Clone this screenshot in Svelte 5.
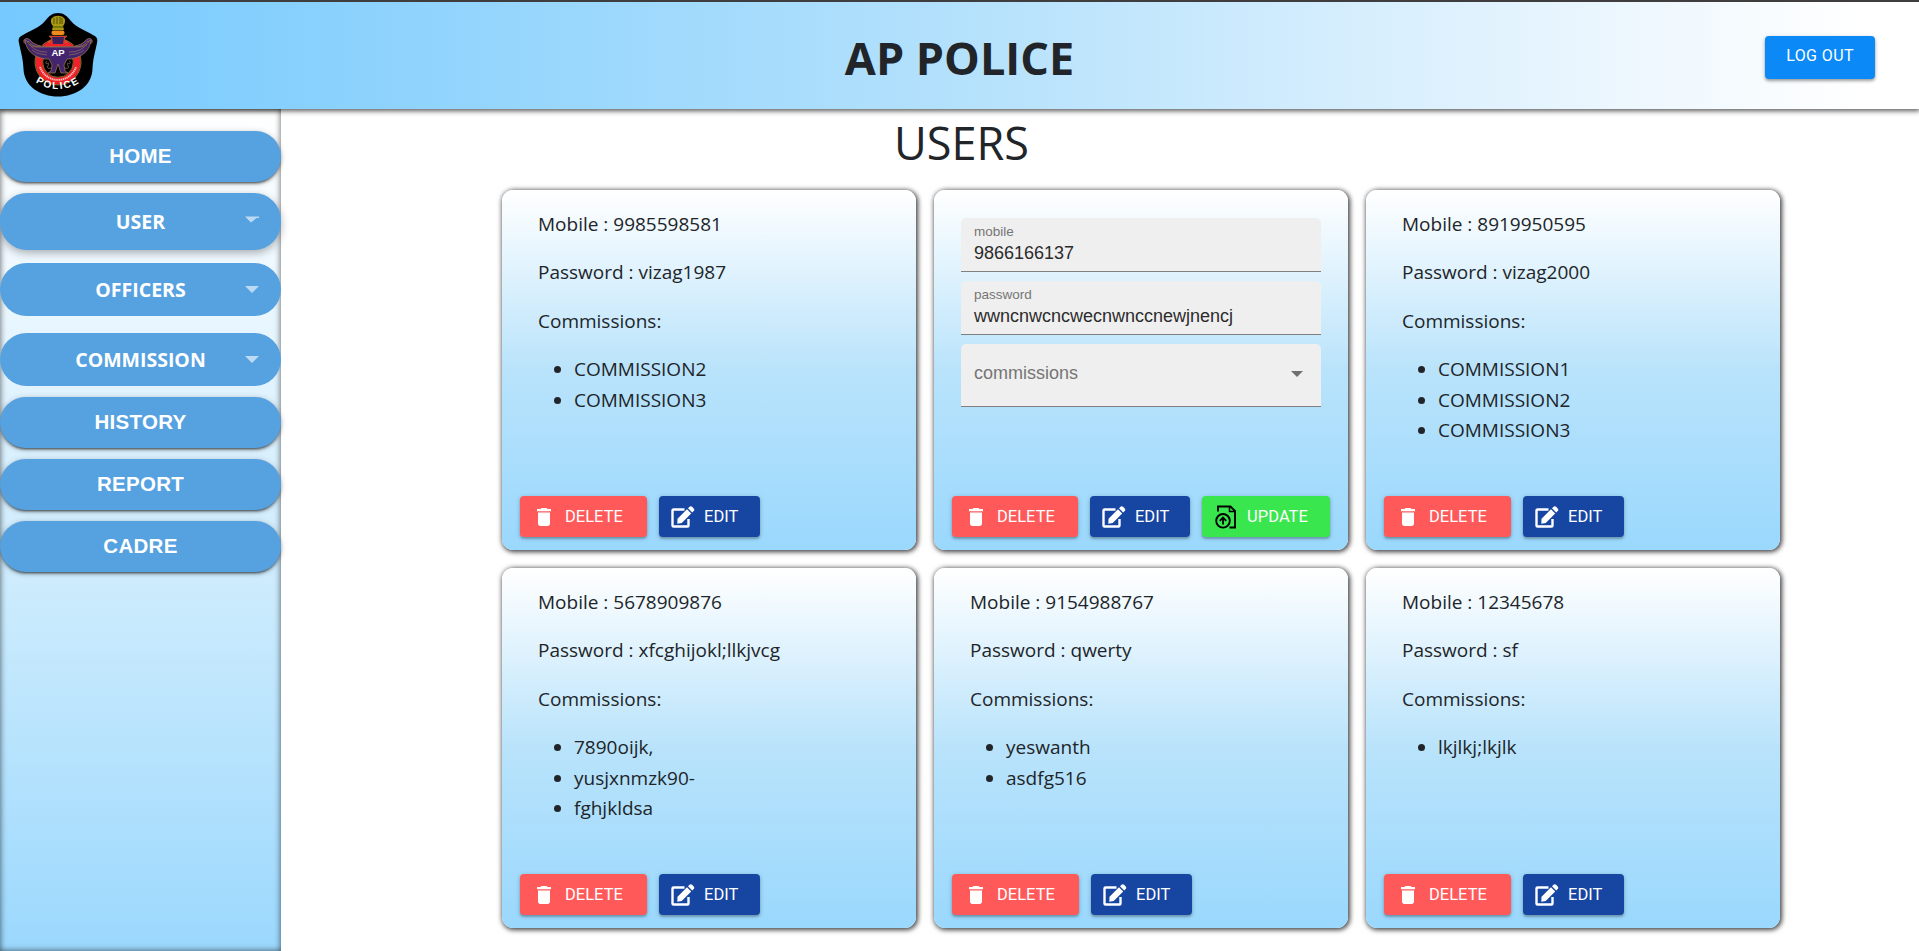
<script>
  const nav = [
    { label: 'HOME', h: 51, mb: 11, kind: 'raised' },
    { label: 'USER', h: 57, mb: 13, kind: 'panel soft', arrow: 'cut' },
    { label: 'OFFICERS', h: 53, mb: 17, kind: 'panel', arrow: 'full' },
    { label: 'COMMISSION', h: 53, mb: 11, kind: 'panel', arrow: 'full' },
    { label: 'HISTORY', h: 51, mb: 11, kind: 'raised' },
    { label: 'REPORT', h: 51, mb: 11, kind: 'raised' },
    { label: 'CADRE', h: 51, mb: 11, kind: 'raised' }
  ];
  const users = [
    { mobile: '9985598581', password: 'vizag1987', commissions: ['COMMISSION2', 'COMMISSION3'] },
    { mobile: '9866166137', password: 'wwncnwcncwecnwnccnewjnencj', editing: true, commissions: [] },
    { mobile: '8919950595', password: 'vizag2000', commissions: ['COMMISSION1', 'COMMISSION2', 'COMMISSION3'] },
    { mobile: '5678909876', password: 'xfcghijokl;llkjvcg', commissions: ['7890oijk,', 'yusjxnmzk90-', 'fghjkldsa'] },
    { mobile: '9154988767', password: 'qwerty', commissions: ['yeswanth', 'asdfg516'] },
    { mobile: '12345678', password: 'sf', commissions: ['lkjlkj;lkjlk'] }
  ];
</script>

<div class="page">
  <header>
    <svg class="logo" viewBox="0 0 80 86" aria-label="AP Police">
      <path d="M40 1c6 0 9 3 13 8 6 7 14 9 22 14 4 2 5 4 4 8-2 10-4 15-4.500 26C74 74 58 84.500 40 84.500S6 74 5.500 57C5 46 3 41 1 31c-1-4 0-6 4-8 8-5 16-7 22-14 4-5 7-8 13-8z" fill="#000" />
      <circle cx="40" cy="50" r="19" fill="#000" stroke="#ee2228" stroke-width="7" />
      <circle cx="40" cy="50" r="23" fill="none" stroke="#b98a3a" stroke-width=".8" />
      <circle cx="40" cy="50" r="15.300" fill="none" stroke="#b98a3a" stroke-width=".7" />
      <path d="M31 24h18l-3 3 4 3H30l4-3z" fill="#e5261f" stroke="#b98a3a" stroke-width=".5" />
      <path d="M34 25h12l-1 7H35z" fill="#39215f" />
      <path d="M33 35h14l9 0c7 0 12-2 14-6 1 4 5 3 4-1-1-2-4-2-6 0-2 3-6 5-11 6M33 35h-9c-7 0-12-2-14-6-1 4-5 3-4-1 1-2 4-2 6 0 2 3 6 5 11 6" fill="#4b2a7c" stroke="#9b774d" stroke-width=".8" />
      <path d="M7 28c3 0 3 7 12 7h42c9 0 9-7 12-7-1 10-8 17-20 19l-4 0-3 6 1 6 3 2-7 0-3-9-3 9h-7l3-2 1-6-3-6-4 0C15 45 8 38 7 28z" fill="#43256f" stroke="#a27d45" stroke-width=".7" />
      <path d="M11 32c5 6 10 8 18 8M14 38c5 4 9 4 15 5M69 32c-5 6-10 8-18 8M66 38c-5 4-9 4-15 5M31 51c-4 2-4-1-2-2M49 51c4 2 4-1 2-2M31 52c-3 4-1 5 2 4M49 52c3 4 1 5-2 4" fill="none" stroke="#8a6a59" stroke-width=".8" />
      <path d="M34 6c3-3 9-3 12 0 2 2 1 6-1 8l1 4H34l1-4c-2-2-3-6-1-8z" fill="#a79a12" />
      <path d="M36 6v6m3-7v7m3-7v7m2-6v6M35 15h10" stroke="#4d470a" stroke-width=".9" fill="none" />
      <rect x="33.500" y="18.500" width="13" height="4.500" rx="2" fill="#ef8a1d" />
      <text x="40" y="43.500" class="ap">AP</text>
      <path id="motto" d="M22 55a19 19 0 0 0 36 0" fill="none" stroke="#f6c9bd" stroke-width="1.900" stroke-dasharray="1.300 .6" />
      <path id="arc" d="M15 68a33 26 0 0 0 50 0" fill="none" />
      <text class="police"><textPath href="#arc" startOffset="50%">POLICE</textPath></text>
    </svg>
    <h1>AP POLICE</h1>
    <button class="logout">LOG OUT</button>
  </header>

  <div class="body">
    <nav>
      {#each nav as n}
        <button class="item {n.kind}" style="height:{n.h}px;margin-bottom:{n.mb}px">
          <span>{n.label}</span>
          {#if n.arrow === 'full'}
            <svg class="arrow" width="14" height="7" viewBox="0 0 14 7"><path d="M0 0h14L7 7z" fill="#bcdaf3" /></svg>
          {:else if n.arrow === 'cut'}
            <svg class="arrow" width="14" height="7" viewBox="0 0 14 7"><path d="M0 .5h14v1.500h-2.500L6 6.500z" fill="#bcdaf3" /></svg>
          {/if}
        </button>
      {/each}
    </nav>

    <main>
      <h2>USERS</h2>
      <div class="grid">
        {#each users as u}
          <section class="card">
            {#if u.editing}
              <div class="form">
                <label class="field"><small>mobile</small><b>{u.mobile}</b></label>
                <label class="field"><small>password</small><b>{u.password}</b></label>
                <div class="field select">
                  <span>commissions</span>
                  <svg width="12" height="6" viewBox="0 0 12 6"><path d="M0 0h12L6 6z" fill="#6f6f6f" /></svg>
                </div>
              </div>
            {:else}
              <div class="info">
                <p>Mobile : {u.mobile}</p>
                <p>Password : {u.password}</p>
                <p>Commissions:</p>
                <ul>
                  {#each u.commissions as c}<li>{c}</li>{/each}
                </ul>
              </div>
            {/if}
            <div class="actions">
              <button class="btn delete">
                <svg width="14" height="18" viewBox="0 0 14 18"><path d="M1 4.500h12v11.300c0 1.200-1 2.200-2.200 2.200H3.200C2 18 1 17 1 15.800zM0 1h3.500l1-1h5l1 1H14v2.200H0z" fill="#fff" /></svg>
                <span>DELETE</span>
              </button>
              <button class="btn edit">
                <svg width="24" height="22" viewBox="0 0 24 22">
                  <path d="M13.500 3.500H2.500a1 1 0 0 0-1 1v15a1 1 0 0 0 1 1h14a1 1 0 0 0 1-1V13" fill="none" stroke="#fff" stroke-width="2.400" />
                  <path d="M6.500 12.800 16 3.300l4.200 4.200-9.500 9.500-4.400.7zM17 2.300l1.500-1.500c.8-.8 1.800-.8 2.600 0l1.600 1.600c.8.800.8 1.800 0 2.600l-1.500 1.500z" fill="#fff" />
                </svg>
                <span>EDIT</span>
              </button>
              {#if u.editing}
                <button class="btn update">
                  <svg width="22" height="24" viewBox="0 0 22 24" fill="none" stroke="#000">
                    <path d="M3 6.500V1.500h12.500l4.500 4.500v16.500h-5.500" stroke-width="1.900" />
                    <path d="M14.500 2v4.500h5" stroke-width="1.500" />
                    <circle cx="8" cy="15.800" r="6.800" stroke-width="1.900" />
                    <path d="M8 19.500v-6.500M4.800 15.800 8 12.600l3.200 3.200" stroke-width="1.800" />
                  </svg>
                  <span>UPDATE</span>
                </button>
              {/if}
            </div>
          </section>
        {/each}
      </div>
    </main>
  </div>
</div>

<style>
  :global(body) { margin: 0; background: #fff; overflow: hidden; }
  * { box-sizing: border-box; }
  button { border: 0; padding: 0; margin: 0; cursor: pointer; }
  .page {
    height: 951px; display: flex; flex-direction: column; overflow: hidden;
    border-top: 2px solid #3f3d3d; color: #212529; font-family: "Open Sans", "Noto Sans", sans-serif;
  }
  header {
    flex: none; height: 107px; display: grid; grid-template-columns: 1fr auto 1fr; align-items: center;
    background: linear-gradient(90deg, #74c9fe 0%, #b4e1fc 50%, #edf7fe 85%, #fff 97%);
    box-shadow: 0 1px 5px 1px rgba(0, 0, 0, .65); position: relative; z-index: 1;
  }
  .logo { width: 80px; height: 86px; margin: -1px 0 0 18px; }
  .ap { font: bold 9.500px "Liberation Sans", sans-serif; fill: #fff; text-anchor: middle; }
  .police { font: bold 10px "Liberation Sans", sans-serif; fill: #fff; text-anchor: middle; letter-spacing: 1.700px; }
  h1 { margin: 4px 0 0; font-size: 45px; font-weight: 700; line-height: 54px; }
  .logout {
    justify-self: end; width: 110px; height: 43px; margin: 4px 44px 0 0; border-radius: 4px; background: #0a89f7; color: #fff;
    font: 16px/39px Roboto, sans-serif; padding-bottom: 4px; letter-spacing: .4px;
    box-shadow: 0 2px 3px rgba(0, 0, 0, .3), 0 1px 5px rgba(0, 0, 0, .15);
  }
  .body { flex: 1; display: flex; min-height: 0; }
  nav {
    width: 281px; flex: none; padding-top: 22px; display: flex; flex-direction: column;
    background: linear-gradient(180deg, #fff 0%, #e1f3fe 33%, #c9eafd 60%, #9bd8fd 100%);
    box-shadow: inset 0 0 6px rgba(0, 0, 0, .65);
  }
  .item {
    flex: none; width: 281px; border-radius: 27px; background: #56a1e0; color: #fff; position: relative;
    display: flex; align-items: center; justify-content: center;
    font: bold 20.500px "Liberation Sans", sans-serif; letter-spacing: .3px;
  }
  .raised { box-shadow: 0 3px 2px -2px rgba(0, 0, 0, .4), 0 2px 3px rgba(0, 0, 0, .3), 0 1px 6px rgba(0, 0, 0, .2); padding-bottom: 2px; }
  .panel { font: bold 19.500px "Open Sans", sans-serif; letter-spacing: 0; }
  .soft { box-shadow: 0 3px 9px rgba(0, 0, 0, .3); }
  .arrow { position: absolute; right: 22px; top: 23px; }
  main { flex: 1; min-width: 0; }
  h2 { margin: 7px 0 0 617px; transform: none; font-size: 45px; line-height: 54px; font-weight: 500; }
  main h2 { margin-left: 613px; }
  .grid { margin: 20px 0 0 221px; display: grid; grid-template-columns: repeat(3, 414px); gap: 18px; grid-auto-rows: 360px; }
  .card {
    border-radius: 11px; display: flex; flex-direction: column; justify-content: space-between; padding: 19px 18px 13px;
    background: linear-gradient(180deg, #fff 0%, #b9e3fb 50%, #9ad8fd 100%);
    box-shadow: 1px 1px 5px 1px rgba(0, 0, 0, .75);
  }
  .info { padding-left: 18px; font-size: 19px; line-height: 30.400px; font-weight: 500; }
  p { margin: 0 0 18px; }
  ul { margin: 0; padding-left: 36px; }
  .form { padding: 9px; display: flex; flex-direction: column; gap: 9px; }
  .field {
    height: 54px; background: #efefef; border-bottom: 1px solid #808080; border-radius: 5px 5px 0 0; padding: 5px 13px;
    display: flex; flex-direction: column; font-family: "Liberation Sans", sans-serif;
  }
  small { font-size: 13.500px; line-height: 17px; color: #757575; }
  .field b { font-weight: 400; font-size: 18px; line-height: 27px; color: #2b2b2b; }
  .select { height: 63px; flex-direction: row; align-items: center; justify-content: space-between; color: #757575; font-size: 18px; padding: 0 18px 3px 13px; }
  .actions { display: flex; gap: 12px; }
  .btn {
    height: 41px; border-radius: 4px; display: flex; align-items: center; color: #fff; font: 16.500px Roboto, sans-serif;
    box-shadow: 0 2px 2px rgba(0, 0, 0, .2), 0 1px 5px rgba(0, 0, 0, .2);
  }
  .delete { width: 127px; background: #ff5959; padding-left: 17px; gap: 14px; }
  .edit { width: 101px; background: #1745a2; padding-left: 12px; gap: 9px; }
  .update { width: 129px; background: #39e64d; padding-left: 13px; gap: 10px; }
</style>
